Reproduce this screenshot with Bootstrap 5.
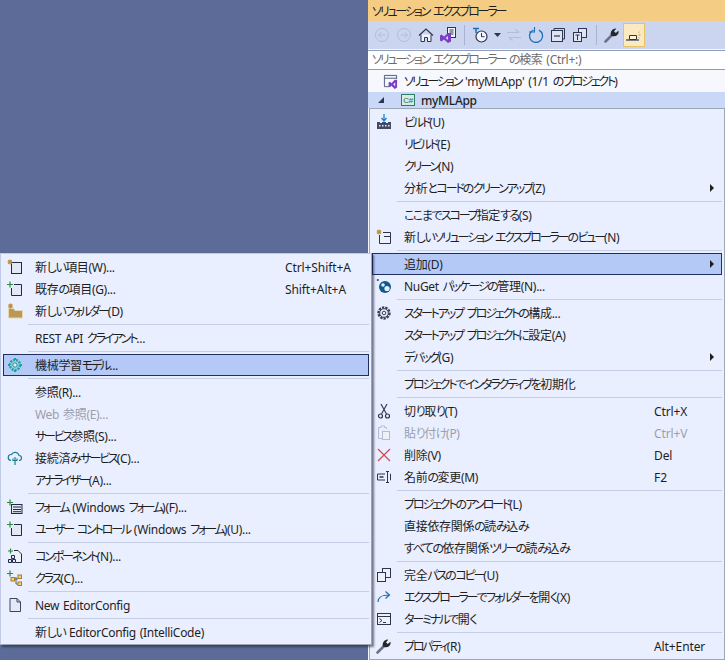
<!DOCTYPE html>
<html lang="ja">
<head>
<meta charset="utf-8">
<title>ソリューション エクスプローラー</title>
<link href="https://cdn.jsdelivr.net/npm/bootstrap@5.3.0/dist/css/bootstrap.min.css" rel="stylesheet">
<style>
html,body{height:660px;overflow:hidden}
body{background:#5d6b99;font-family:"Noto Sans","Noto Sans CJK JP",sans-serif;font-size:12px;line-height:16px;color:#1e1e1e;font-feature-settings:"palt";letter-spacing:-.3px;word-spacing:1px}
.vs-ka{letter-spacing:-2.15px}
.vs-hi{letter-spacing:-1.5px}
.vs-desk{width:725px;height:660px;position:relative}
.vs-void{width:368px}
.vs-panel{width:357px;height:660px;background:#f6f8fe}
.vs-title{height:21px;background:#f5cc84;padding-left:4px;padding-top:2px}
.vs-tools{height:28px;background:#ccd5f0;padding-left:3px}
.vs-tb{width:22px;height:24px}
.vs-tb-sep{width:10px;height:24px}
.vs-tb-sep i{display:block;width:1px;height:20px;background:#a9b3d0}
.vs-tb-caret{width:12px;height:24px}
.vs-tb-on{background:#fbe9bf;border:1px solid #e5c365}
.vs-search{height:20px;background:#fff;border:1px solid #8e9bbc;border-width:1px 0 1px 0;margin-top:1px;padding-left:4px;color:#6d6d6d}
.vs-tree1{height:22px;padding-left:15px;gap:6px}
.vs-tree1 > span{padding-top:2px}
.vs-tree2{height:16px;background:#c9d8f6;padding-left:9px;font-weight:500}
.vs-tree2 b{font-weight:500;padding-top:2px;margin-left:6px}
.vs-menu{background:#eaefff;padding:2px 0;border:1px solid #9ba7b7}
.vs-main{height:552px;margin-left:1px}
.vs-sub{position:absolute;left:0;top:253px;width:372px;height:392px;box-shadow:2px 2px 2px rgba(30,35,60,.6);border-left-color:#c0cae6;border-top-color:#c0cae6}
.vs-row{height:22px;margin:0 2px;border:1px solid transparent;color:#1e1e1e;position:relative}
.vs-ic{width:28px;flex:none;justify-content:center;padding-right:6px}
.vs-lb{flex:1;padding-left:3px;padding-top:2px;white-space:nowrap}
.vs-key{position:absolute;white-space:nowrap;letter-spacing:-.1px;padding-top:2px}
.vs-main .vs-key{left:281px}
.vs-sub .vs-key{left:281px}
.vs-arrow{position:absolute;right:7px;top:6px;width:0;height:0;border-left:4px solid #1e1e1e;border-top:4px solid transparent;border-bottom:4px solid transparent}
.vs-on{background:#b5c9f7;border-color:#1f2f63}
.vs-off{color:#9a9fab}
.vs-sep{height:1px;margin:2px 2px 2px 27px;background:#c5cee5;border:0;opacity:1}
svg{display:block;flex:none}
</style>
</head>
<body>
<svg width="0" height="0" class="position-absolute">
<defs>
<symbol id="i-new" viewBox="0 0 16 16"><rect x="4.500" y="3.500" width="10" height="11" fill="#e4e8f4" stroke="#1f2a4a"/><path d="M3 .5v5M.5 3h5M1.200 1.200l3.600 3.600M4.800 1.200 1.200 4.800" stroke="#b8903f" stroke-width="1.100"/></symbol>
<symbol id="i-exist" viewBox="0 0 16 16"><path d="M7 3.500h7.500v11h-10V7" fill="#e4e8f4" stroke="#1f2a4a"/><path d="M3 .5v6M0 3.500h6" stroke="#2f8a3f" stroke-width="1.200"/></symbol>
<symbol id="i-folder" viewBox="0 0 16 16"><path d="M1.500 5.500h5l1.500 2h7.500v7.500H1.500z" fill="#b9985a" stroke="#e6d9ad"/><path d="M3.500 .5v5M1 3h5M1.700 1.200l3.600 3.600M5.300 1.200 1.700 4.800" stroke="#b8903f" stroke-width="1.100"/></symbol>
<symbol id="i-gear" viewBox="0 0 16 16"><circle cx="8" cy="8" r="5" fill="none" stroke="#18a8a0" stroke-width="2.600" stroke-dasharray="2 1"/><circle cx="8" cy="8" r="2.200" fill="#d9f3f0" stroke="#1a8f8a"/><path d="M1 8h2M13 8h2M8 1v2M8 13v2" stroke="#17a39b" stroke-width="2"/></symbol>
<symbol id="i-cloud" viewBox="0 0 16 16"><path d="M4 10.500a3 3 0 0 1 .5-6 4 4 0 0 1 7.500 1 2.500 2.500 0 0 1 0 5" fill="#eaefff" stroke="#1c7f95" stroke-width="1.200"/><path d="M8 7v8M6 8.500v2h4v-2" fill="none" stroke="#1c7f95" stroke-width="1.200"/></symbol>
<symbol id="i-form" viewBox="0 0 16 16"><rect x="4.500" y="5.500" width="10.500" height="9" fill="#e4e8f4" stroke="#1f2a4a"/><path d="M6 8h8M6 10.500h8M6 12.700h8" stroke="#1f2a4a"/><path d="M3 .5v6M0 3.500h6" stroke="#2f8a3f" stroke-width="1.200"/></symbol>
<symbol id="i-comp" viewBox="0 0 16 16"><path d="M7 2.500h4l3.500 3.500v8.500H9" fill="#eef1f9" stroke="#1f2a4a"/><path d="M3.500 .5v5M1 3h5" stroke="#2f8a3f" stroke-width="1.200"/><path d="M4.500 7.500h3v3h-3zM1.500 11.500h3v3h-3zM5.500 11.500h3v3h-3z" fill="#e4e8f4" stroke="#1f2a4a"/></symbol>
<symbol id="i-class" viewBox="0 0 16 16"><path d="M3 .5v6M0 3.500h6" stroke="#2f8a3f" stroke-width="1.200"/><path d="M6 9h5M9 7v7h3" fill="none" stroke="#555c78"/><rect x="4" y="7.500" width="3.500" height="3.500" fill="#efd08a" stroke="#a97e1c"/><rect x="11" y="5" width="3.500" height="3.500" fill="#efd08a" stroke="#a97e1c"/><rect x="11" y="12" width="3.500" height="3.500" fill="#efd08a" stroke="#a97e1c"/></symbol>
<symbol id="i-page" viewBox="0 0 16 16"><path d="M3 1.500h7l3.500 3.500v9.500H3z" fill="#e6eaf5" stroke="#3b4560"/><path d="M10 1.500V5h3.500" fill="none" stroke="#3b4560"/></symbol>
<symbol id="i-build" viewBox="0 0 16 16"><path d="M1 8h3v1h2V8h4v1h2V8h3v7H1z" fill="#414a66"/><path d="M3 11h1.500v1.500H3zM6 11h1.500v1.500H6zM9 11h1.500v1.500H9zM12 11h1.500v1.500H12z" fill="#eaefff"/><path d="M8 0v6M5.500 4 8 7l2.500-3" fill="none" stroke="#1c7fd0" stroke-width="1.300"/></symbol>
<symbol id="i-view" viewBox="0 0 16 16"><path d="M3.500 6v8.500h11v-11H7" fill="#eef1f9" stroke="#2b3552"/><path d="M8 7.500h6.500" stroke="#2b3552"/><path d="M3 .5v5M.5 3h5M1.200 1.200l3.600 3.600M4.800 1.200 1.200 4.800" stroke="#b8903f" stroke-width="1.100"/></symbol>
<symbol id="i-nuget" viewBox="0 0 16 16"><circle cx="9" cy="9" r="6" fill="#0f5a8f"/><circle cx="7" cy="7" r="1.800" fill="#e8f0fb"/><circle cx="11" cy="10.500" r="2.600" fill="#e8f0fb"/><circle cx="1.800" cy="2" r="1.100" fill="#0f5a8f"/></symbol>
<symbol id="i-cog" viewBox="0 0 16 16"><circle cx="8" cy="8" r="5.300" fill="none" stroke="#3a4156" stroke-width="2.800" stroke-dasharray="2.200 1"/><circle cx="8" cy="8" r="4.300" fill="#eaefff" stroke="#3a4156"/><circle cx="8" cy="8" r="1.800" fill="none" stroke="#3a4156"/></symbol>
<symbol id="i-cut" viewBox="0 0 16 16"><path d="M5 1l5.500 10M11 1 5.500 11" stroke="#2d3550" stroke-width="1.100" fill="none"/><circle cx="4.500" cy="13" r="2" fill="none" stroke="#2d3550" stroke-width="1.200"/><circle cx="11.500" cy="13" r="2" fill="none" stroke="#2d3550" stroke-width="1.200"/></symbol>
<symbol id="i-paste" viewBox="0 0 16 16"><path d="M10.500 4V2.500h-2V1H5v1.500H2.500v11H6" fill="none" stroke="#b7bdcb"/><rect x="6.500" y="6.500" width="7" height="8" fill="#eef1f9" stroke="#b7bdcb"/></symbol>
<symbol id="i-x" viewBox="0 0 16 16"><path d="M2 2l12 12M14 2 2 14" stroke="#cf4a55" stroke-width="1.300"/></symbol>
<symbol id="i-ren" viewBox="0 0 16 16"><path d="M9 5H1.500v6H9" fill="none" stroke="#2d3550"/><path d="M3.500 8h4" stroke="#2d3550" stroke-width="1.500"/><path d="M10 2.500h3M10 13.500h3M11.500 2.500v11M14 5h.5v6H14" fill="none" stroke="#2d3550"/></symbol>
<symbol id="i-copy" viewBox="0 0 16 16"><rect x="6.500" y="1.500" width="8" height="9" fill="#eef1f9" stroke="#2d3550"/><rect x="1.500" y="5.500" width="8" height="9" fill="#eef1f9" stroke="#2d3550"/></symbol>
<symbol id="i-open" viewBox="0 0 16 16"><path d="M2 13c0-5 3-7 11-7M9.500 2.500 13.500 6l-4 3.500" fill="none" stroke="#1f6fb8" stroke-width="1.200"/></symbol>
<symbol id="i-term" viewBox="0 0 16 16"><rect x="1.500" y="2.500" width="13" height="11" fill="#eef1f9" stroke="#2d3550"/><path d="M2 5.500h12" stroke="#2d3550"/><path d="M3.500 7.500 6 9.500l-2.500 2M7 11.500h3" fill="none" stroke="#2d3550"/></symbol>
<symbol id="i-wrench" viewBox="0 0 16 16"><path d="M1.500 14.500 8 8" stroke="#6d7386" stroke-width="2.600" stroke-linecap="round"/><path d="M7 8.500c-1-3 .5-6 4-7l1.300.3L10 4.200l1.800 1.800 2.500-2.300.4 1.300c-.3 3.500-3.700 5-6.500 4z" fill="#25272e"/></symbol>
<symbol id="i-back" viewBox="0 0 16 16"><circle cx="8" cy="8" r="6.500" fill="none" stroke="#b4bdd6"/><path d="M11.500 8h-7M7.500 5l-3 3 3 3" fill="none" stroke="#b4bdd6"/></symbol>
<symbol id="i-fwd" viewBox="0 0 16 16"><circle cx="8" cy="8" r="6.500" fill="none" stroke="#b4bdd6"/><path d="M4.500 8h7M8.500 5l3 3-3 3" fill="none" stroke="#b4bdd6"/></symbol>
<symbol id="i-home" viewBox="0 0 16 16"><path d="M1 8.500 8 2l7 6.500" fill="none" stroke="#2d3550" stroke-width="1.200"/><path d="M3 7.500v7h3.500v-4h3v4H13v-7" fill="#f2f4fb" stroke="#2d3550"/></symbol>
<symbol id="i-vsdoc" viewBox="0 0 16 16"><rect x="7.500" y=".5" width="8" height="10" fill="#f2f4fb" stroke="#2d3550"/><path d="M9.500 3h4M9.500 5h4M9.500 7h4" stroke="#2d3550"/><path d="M11 6v8.500L8 16 4 12.500 1.500 14.500 0 13.500v-5L1.500 7.500 4 9.500 8 6z" fill="#7a3fc4"/><path d="M8 9v4L5.500 11z" fill="#ccd5f0"/></symbol>
<symbol id="i-hist" viewBox="0 0 16 16"><circle cx="9.500" cy="9.500" r="5.500" fill="#f2f4fb" stroke="#2d3550" stroke-width="1.200"/><path d="M9.500 6v3.700h3" fill="none" stroke="#2d3550"/><path d="M1 1.500h6" stroke="#1f6fb8" stroke-width="1.500"/><path d="M4 2v4" stroke="#1f6fb8" stroke-width="1.500"/></symbol>
<symbol id="i-sync" viewBox="0 0 16 16"><path d="M1 5.500h12M9.500 2.500 13 5.500M15 10.500H3M6.500 13.500 3 10.500" fill="none" stroke="#b4bdd6" stroke-width="1.100"/></symbol>
<symbol id="i-ref" viewBox="0 0 16 16"><path d="M5.500 3A6.500 6.500 0 1 0 11 3.200" fill="none" stroke="#1f6fb8" stroke-width="1.300"/><path d="M7 0v5.500H1.500" fill="none" stroke="#1f6fb8" stroke-width="1.100" transform="translate(-.5 -.5)"/></symbol>
<symbol id="i-coll" viewBox="0 0 16 16"><path d="M4 3V1.500h10.500V12H13" fill="none" stroke="#2d3550"/><rect x="1.500" y="3.500" width="11" height="11" fill="#dfe4f3" stroke="#2d3550"/><path d="M4 9h6" stroke="#2d3550" stroke-width="1.200"/></symbol>
<symbol id="i-two" viewBox="0 0 16 16"><rect x="6.500" y="1.500" width="8" height="9" fill="#dfe4f3" stroke="#2d3550"/><rect x="1.500" y="5.500" width="8" height="9" fill="#dfe4f3" stroke="#2d3550"/><path d="M3.500 8h4M5.500 8v5" stroke="#2d3550"/></symbol>
<symbol id="i-pin" viewBox="0 0 16 16"><path d="M0 13h13" stroke="#2d3550" stroke-width="1.200"/><path d="M3.500 8.500h7v4h-7z" fill="#fff6d8" stroke="#2d3550"/><path d="M12.500 5.500l1-.5M12.500 8h2M12.500 10.500l1 .5" stroke="#b89a50"/></symbol>
<symbol id="i-sol" viewBox="0 0 16 16"><path d="M1.500 1.500h13v4M1.500 1.500v12h5" fill="#f2f4fb" stroke="#4d5877"/><path d="M2 4.500h12" stroke="#4d5877"/><path d="M15 6.500v8L12.500 16 9 12.500 7.500 14 6 13.300V9l1.500-.8L9 9.800 12.500 6z" fill="#7a3fc4"/><path d="M13 9v4l-2-2z" fill="#f6f8fe"/></symbol>
</defs>
</svg>

<div class="vs-desk d-flex">
  <div class="vs-void"></div>
  <div class="vs-panel d-flex flex-column">
    <div class="vs-title d-flex align-items-center"><span>ソリューション エクスプローラー</span></div>
    <div class="vs-tools d-flex align-items-center">
      <span class="vs-tb d-flex align-items-center justify-content-center"><svg width="16" height="16"><use href="#i-back"/></svg></span>
      <span class="vs-tb d-flex align-items-center justify-content-center"><svg width="16" height="16"><use href="#i-fwd"/></svg></span>
      <span class="vs-tb d-flex align-items-center justify-content-center"><svg width="16" height="16"><use href="#i-home"/></svg></span>
      <span class="vs-tb d-flex align-items-center justify-content-center"><svg width="16" height="16"><use href="#i-vsdoc"/></svg></span>
      <span class="vs-tb-sep d-flex align-items-center justify-content-center"><i></i></span>
      <span class="vs-tb d-flex align-items-center justify-content-center"><svg width="16" height="16"><use href="#i-hist"/></svg></span>
      <span class="vs-tb-caret d-flex align-items-center justify-content-center"><svg width="7" height="4" viewBox="0 0 7 4"><path d="M0 0h7L3.500 4z" fill="#2d3550"/></svg></span>
      <span class="vs-tb d-flex align-items-center justify-content-center"><svg width="16" height="16"><use href="#i-sync"/></svg></span>
      <span class="vs-tb d-flex align-items-center justify-content-center"><svg width="16" height="16"><use href="#i-ref"/></svg></span>
      <span class="vs-tb d-flex align-items-center justify-content-center"><svg width="16" height="16"><use href="#i-coll"/></svg></span>
      <span class="vs-tb d-flex align-items-center justify-content-center"><svg width="16" height="16"><use href="#i-two"/></svg></span>
      <span class="vs-tb-sep d-flex align-items-center justify-content-center"><i></i></span>
      <span class="vs-tb d-flex align-items-center justify-content-center"><svg width="16" height="16"><use href="#i-wrench"/></svg></span>
      <span class="vs-tb vs-tb-on d-flex align-items-center justify-content-center"><svg width="16" height="16"><use href="#i-pin"/></svg></span>
    </div>
    <div class="vs-search d-flex align-items-center"><span>ソリューション エクスプローラー の検索 (Ctrl+:)</span></div>
    <div class="vs-tree1 d-flex align-items-center"><svg width="15" height="15"><use href="#i-sol"/></svg><span>ソリューション 'myMLApp' (1/1 のプロジェクト)</span></div>
    <div class="vs-tree2 d-flex align-items-center">
      <svg width="8" height="8" viewBox="0 0 8 8" class="me-3"><path d="M7 1v6H1z" fill="#2d3550"/></svg>
      <svg width="14" height="12" viewBox="0 0 14 12"><rect x=".5" y=".5" width="13" height="11" fill="#d5ebe3" stroke="#2f7d66"/><text x="7" y="9" font-size="8" text-anchor="middle" fill="#2f6d5a" font-family="Liberation Sans">C#</text></svg>
      <b>myMLApp</b>
    </div>

    <div class="vs-menu vs-main flex-grow-1">
      <div class="vs-row d-flex align-items-center"><span class="vs-ic d-flex"><svg width="16" height="16"><use href="#i-build"/></svg></span><span class="vs-lb">ビルド(U)</span></div>
      <div class="vs-row d-flex align-items-center"><span class="vs-ic d-flex"></span><span class="vs-lb">リビルド(E)</span></div>
      <div class="vs-row d-flex align-items-center"><span class="vs-ic d-flex"></span><span class="vs-lb">クリーン(N)</span></div>
      <div class="vs-row d-flex align-items-center"><span class="vs-ic d-flex"></span><span class="vs-lb">分析とコードのクリーンアップ(Z)</span><span class="vs-arrow"></span></div>
      <hr class="vs-sep">
      <div class="vs-row d-flex align-items-center"><span class="vs-ic d-flex"></span><span class="vs-lb">ここまでスコープ指定する(S)</span></div>
      <div class="vs-row d-flex align-items-center"><span class="vs-ic d-flex"><svg width="16" height="16"><use href="#i-view"/></svg></span><span class="vs-lb">新しいソリューション エクスプローラーのビュー(N)</span></div>
      <hr class="vs-sep">
      <div class="vs-row vs-on d-flex align-items-center"><span class="vs-ic d-flex"></span><span class="vs-lb">追加(D)</span><span class="vs-arrow"></span></div>
      <div class="vs-row d-flex align-items-center"><span class="vs-ic d-flex"><svg width="16" height="16"><use href="#i-nuget"/></svg></span><span class="vs-lb">NuGet パッケージの管理(N)...</span></div>
      <hr class="vs-sep">
      <div class="vs-row d-flex align-items-center"><span class="vs-ic d-flex"><svg width="16" height="16"><use href="#i-cog"/></svg></span><span class="vs-lb">スタートアップ プロジェクトの構成...</span></div>
      <div class="vs-row d-flex align-items-center"><span class="vs-ic d-flex"></span><span class="vs-lb">スタートアップ プロジェクトに設定(A)</span></div>
      <div class="vs-row d-flex align-items-center"><span class="vs-ic d-flex"></span><span class="vs-lb">デバッグ(G)</span><span class="vs-arrow"></span></div>
      <hr class="vs-sep">
      <div class="vs-row d-flex align-items-center"><span class="vs-ic d-flex"></span><span class="vs-lb">プロジェクトでインタラクティブを初期化</span></div>
      <hr class="vs-sep">
      <div class="vs-row d-flex align-items-center"><span class="vs-ic d-flex"><svg width="16" height="16"><use href="#i-cut"/></svg></span><span class="vs-lb">切り取り(T)</span><span class="vs-key">Ctrl+X</span></div>
      <div class="vs-row vs-off d-flex align-items-center"><span class="vs-ic d-flex"><svg width="16" height="16"><use href="#i-paste"/></svg></span><span class="vs-lb">貼り付け(P)</span><span class="vs-key">Ctrl+V</span></div>
      <div class="vs-row d-flex align-items-center"><span class="vs-ic d-flex"><svg width="16" height="16"><use href="#i-x"/></svg></span><span class="vs-lb">削除(V)</span><span class="vs-key">Del</span></div>
      <div class="vs-row d-flex align-items-center"><span class="vs-ic d-flex"><svg width="16" height="16"><use href="#i-ren"/></svg></span><span class="vs-lb">名前の変更(M)</span><span class="vs-key">F2</span></div>
      <hr class="vs-sep">
      <div class="vs-row d-flex align-items-center"><span class="vs-ic d-flex"></span><span class="vs-lb">プロジェクトのアンロード(L)</span></div>
      <div class="vs-row d-flex align-items-center"><span class="vs-ic d-flex"></span><span class="vs-lb">直接依存関係の読み込み</span></div>
      <div class="vs-row d-flex align-items-center"><span class="vs-ic d-flex"></span><span class="vs-lb">すべての依存関係ツリーの読み込み</span></div>
      <hr class="vs-sep">
      <div class="vs-row d-flex align-items-center"><span class="vs-ic d-flex"><svg width="16" height="16"><use href="#i-copy"/></svg></span><span class="vs-lb">完全パスのコピー(U)</span></div>
      <div class="vs-row d-flex align-items-center"><span class="vs-ic d-flex"><svg width="16" height="16"><use href="#i-open"/></svg></span><span class="vs-lb">エクスプローラーでフォルダーを開く(X)</span></div>
      <div class="vs-row d-flex align-items-center"><span class="vs-ic d-flex"><svg width="16" height="16"><use href="#i-term"/></svg></span><span class="vs-lb">ターミナルで開く</span></div>
      <hr class="vs-sep">
      <div class="vs-row d-flex align-items-center"><span class="vs-ic d-flex"><svg width="16" height="16"><use href="#i-wrench"/></svg></span><span class="vs-lb">プロパティ(R)</span><span class="vs-key">Alt+Enter</span></div>
    </div>
  </div>

  <div class="vs-menu vs-sub">
    <div class="vs-row d-flex align-items-center"><span class="vs-ic d-flex"><svg width="16" height="16"><use href="#i-new"/></svg></span><span class="vs-lb">新しい項目(W)...</span><span class="vs-key">Ctrl+Shift+A</span></div>
    <div class="vs-row d-flex align-items-center"><span class="vs-ic d-flex"><svg width="16" height="16"><use href="#i-exist"/></svg></span><span class="vs-lb">既存の項目(G)...</span><span class="vs-key">Shift+Alt+A</span></div>
    <div class="vs-row d-flex align-items-center"><span class="vs-ic d-flex"><svg width="16" height="16"><use href="#i-folder"/></svg></span><span class="vs-lb">新しいフォルダー(D)</span></div>
    <hr class="vs-sep">
    <div class="vs-row d-flex align-items-center"><span class="vs-ic d-flex"></span><span class="vs-lb">REST API クライアント...</span></div>
    <hr class="vs-sep">
    <div class="vs-row vs-on d-flex align-items-center"><span class="vs-ic d-flex"><svg width="16" height="16"><use href="#i-gear"/></svg></span><span class="vs-lb">機械学習モデル...</span></div>
    <hr class="vs-sep">
    <div class="vs-row d-flex align-items-center"><span class="vs-ic d-flex"></span><span class="vs-lb">参照(R)...</span></div>
    <div class="vs-row vs-off d-flex align-items-center"><span class="vs-ic d-flex"></span><span class="vs-lb">Web 参照(E)...</span></div>
    <div class="vs-row d-flex align-items-center"><span class="vs-ic d-flex"></span><span class="vs-lb">サービス参照(S)...</span></div>
    <div class="vs-row d-flex align-items-center"><span class="vs-ic d-flex"><svg width="16" height="16"><use href="#i-cloud"/></svg></span><span class="vs-lb">接続済みサービス(C)...</span></div>
    <div class="vs-row d-flex align-items-center"><span class="vs-ic d-flex"></span><span class="vs-lb">アナライザー(A)...</span></div>
    <hr class="vs-sep">
    <div class="vs-row d-flex align-items-center"><span class="vs-ic d-flex"><svg width="16" height="16"><use href="#i-form"/></svg></span><span class="vs-lb">フォーム (Windows フォーム)(F)...</span></div>
    <div class="vs-row d-flex align-items-center"><span class="vs-ic d-flex"><svg width="16" height="16"><use href="#i-exist"/></svg></span><span class="vs-lb">ユーザー コントロール (Windows フォーム)(U)...</span></div>
    <hr class="vs-sep">
    <div class="vs-row d-flex align-items-center"><span class="vs-ic d-flex"><svg width="16" height="16"><use href="#i-comp"/></svg></span><span class="vs-lb">コンポーネント(N)...</span></div>
    <div class="vs-row d-flex align-items-center"><span class="vs-ic d-flex"><svg width="16" height="16"><use href="#i-class"/></svg></span><span class="vs-lb">クラス(C)...</span></div>
    <hr class="vs-sep">
    <div class="vs-row d-flex align-items-center"><span class="vs-ic d-flex"><svg width="16" height="16"><use href="#i-page"/></svg></span><span class="vs-lb">New EditorConfig</span></div>
    <hr class="vs-sep">
    <div class="vs-row d-flex align-items-center"><span class="vs-ic d-flex"></span><span class="vs-lb">新しい EditorConfig (IntelliCode)</span></div>
  </div>
</div>
<script src="https://cdn.jsdelivr.net/npm/bootstrap@5.3.0/dist/js/bootstrap.bundle.min.js"></script>
<script>
document.querySelectorAll('.vs-lb,.vs-title span,.vs-search span,.vs-tree1 > span').forEach(function(el){
  var t=el.textContent;el.textContent='';
  t.split(/([\u30A0-\u30FF]+|[\u3040-\u309F]+)/).forEach(function(p){
    if(!p)return;
    var c=/^[\u30A0-\u30FF]/.test(p)?'vs-ka':/^[\u3040-\u309F]/.test(p)?'vs-hi':'';
    if(c){var s=document.createElement('span');s.className=c;s.textContent=p;el.appendChild(s);}
    else el.appendChild(document.createTextNode(p));
  });
});
</script>
</body>
</html>
